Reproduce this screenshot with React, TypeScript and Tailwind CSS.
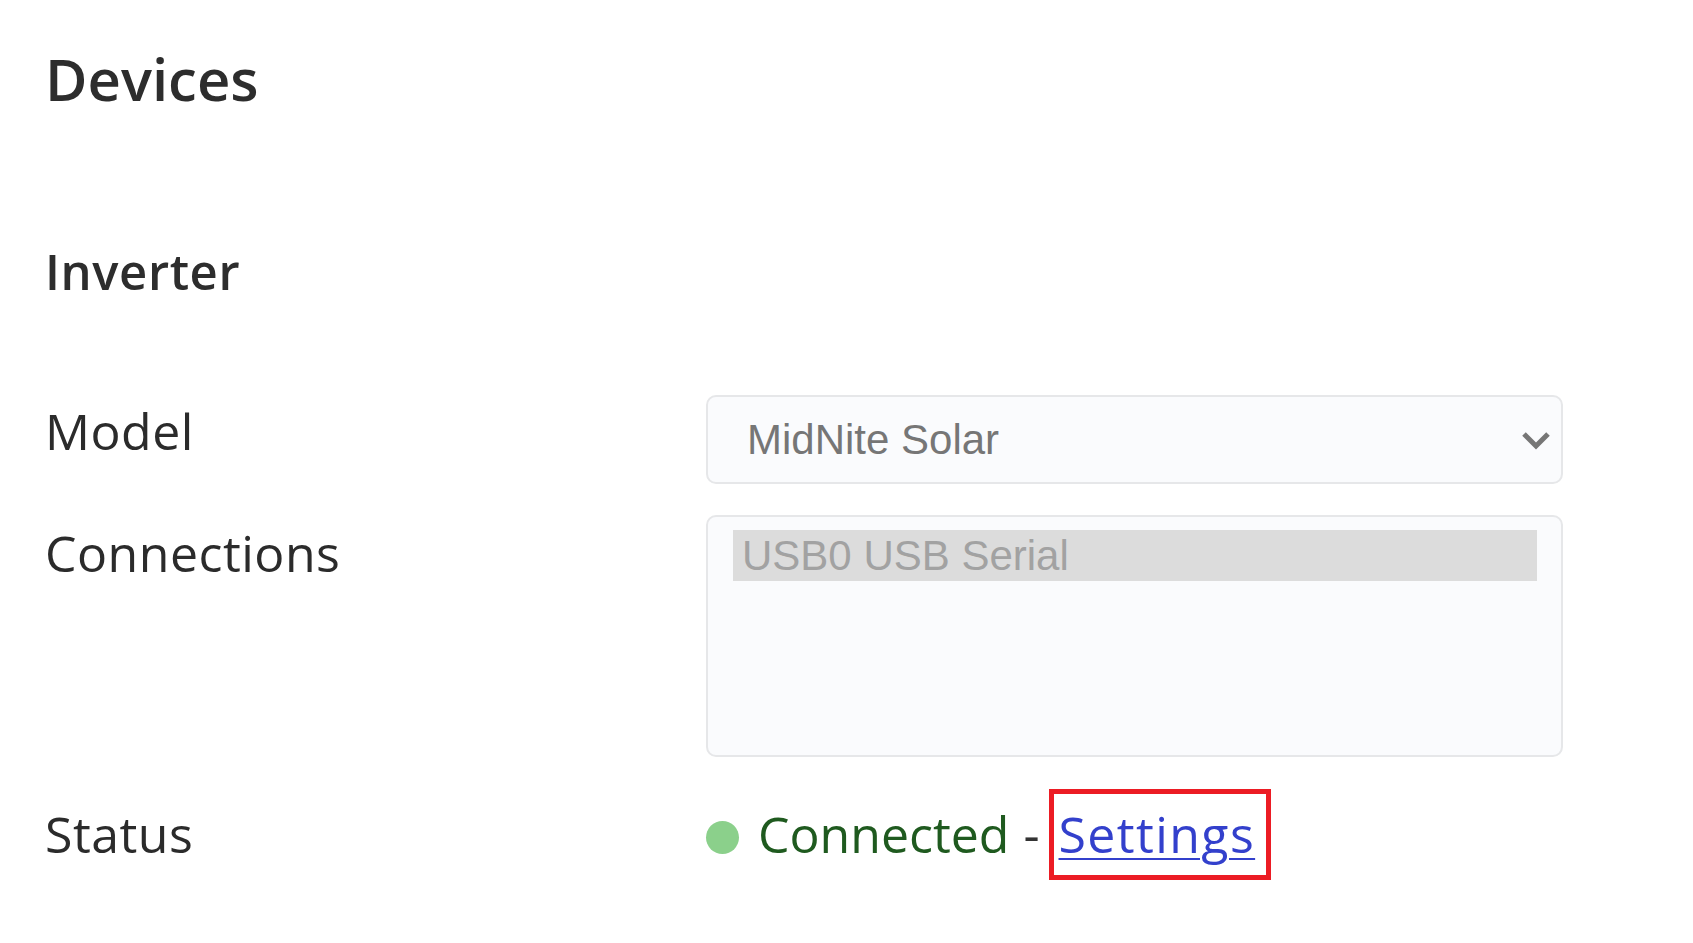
function Chevron() {
  return (
    <svg width="30" height="20" viewBox="0 0 30 20" className="shrink-0" aria-hidden="true">
      <path d="M3 4 L15 16 L27 4" fill="none" stroke="#767676" strokeWidth="5" />
    </svg>
  );
}

function FieldLabel({ children }: { children: string }) {
  return <div className="text-[50px] leading-[69px] tracking-[0.5px] text-[#2b2b2b]">{children}</div>;
}

export default function App() {
  return (
    <div className="min-h-screen bg-white pl-[45px] pt-[45px] font-['Open_Sans',sans-serif]">
      <h1 className="text-[58px] font-semibold leading-[68px] text-[#2d2d2d]">Devices</h1>
      <h2 className="mt-[129px] text-[49px] font-semibold leading-[58px] tracking-[0.6px] text-[#2d2d2d]">Inverter</h2>

      <div className="mt-[95px] grid grid-cols-[661px_857px] items-start">
        <div className="pt-[2px]">
          <FieldLabel>Model</FieldLabel>
        </div>
        <div className="flex h-[89px] items-center justify-between rounded-[10px] border-2 border-[#e6e7e9] bg-[#fafbfd] pl-[39px] pr-[10px]">
          <span className="font-['Liberation_Sans',sans-serif] text-[42px] text-[#767676]">MidNite Solar</span>
          <Chevron />
        </div>
      </div>

      <div className="mt-[31px] grid grid-cols-[661px_857px] items-start">
        <div className="pt-[4px]">
          <FieldLabel>Connections</FieldLabel>
        </div>
        <div className="h-[242px] rounded-[10px] border-2 border-[#e6e7e9] bg-[#fafbfd] pl-[25px] pr-[24px] pt-[13px]">
          <div className="flex h-[51px] items-center bg-[#dcdcdc] pl-[9px] font-['Liberation_Sans',sans-serif] text-[42px] text-[#a2a2a2]">
            USB0 USB Serial
          </div>
        </div>
      </div>

      <div className="mt-[32px] grid grid-cols-[661px_857px] items-center">
        <FieldLabel>Status</FieldLabel>
        <div className="flex items-center text-[50px] leading-[69px]">
          <span className="mr-[19px] mt-[6px] h-[33px] w-[33px] shrink-0 rounded-full bg-[#8bd08b]" />
          <span className="text-[#1f5a1f]">Connected</span>
          <span className="ml-[14px] text-[#333333]">-</span>
          <span className="ml-[9px] inline-block border-[5px] border-[#ec1c24] py-[6px] pl-[5px] pr-[11px]">
            <a href="#" className="tracking-[1.4px] text-[#3340cc] underline decoration-2 underline-offset-[5px]">
              Settings
            </a>
          </span>
        </div>
      </div>
    </div>
  );
}
